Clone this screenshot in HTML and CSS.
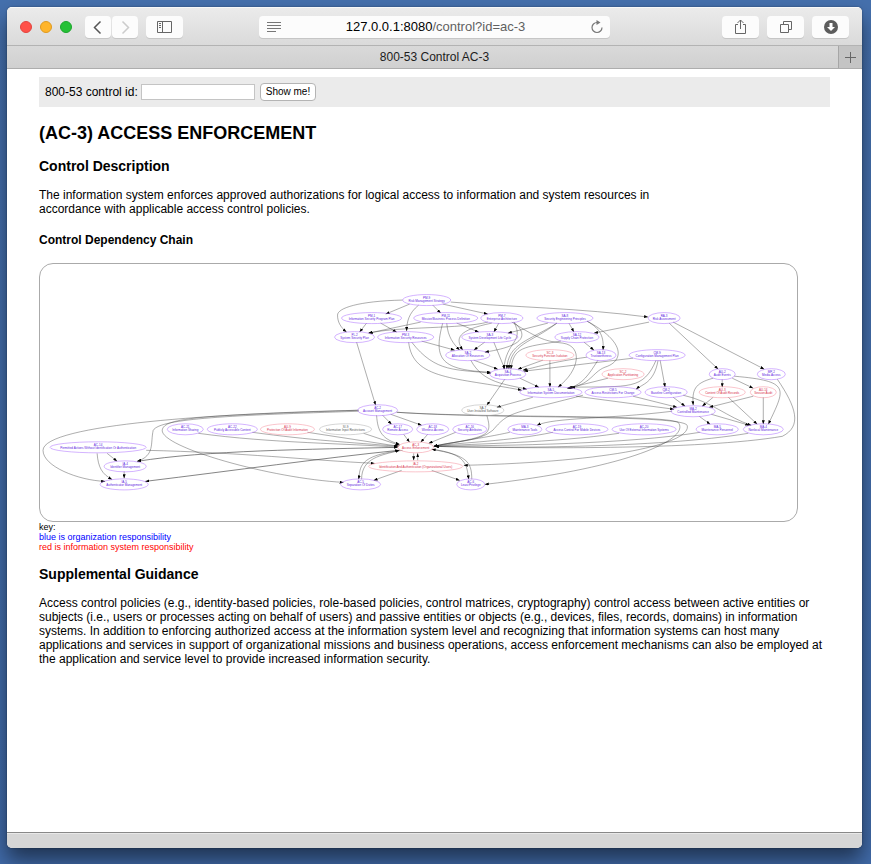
FILE: index.html
```html
<!DOCTYPE html>
<html lang="en">
<head>
<meta charset="utf-8">
<title>800-53 Control AC-3</title>
<link rel="stylesheet" href="styles.css">
</head>
<body>
<div class="window">
  <header class="toolbar">
    <div class="tools">
      <div class="lights"><span class="light close"></span><span class="light minimize"></span><span class="light expand"></span></div>
      <div class="history">
        <button class="tool narrow" type="button" aria-label="Back"><svg width="26" height="22" viewBox="0 0 26 22"><path d="M15.500 5.500 9.500 11.500l6 6" fill="none" stroke="#555" stroke-width="1.500"/></svg></button>
        <button class="tool narrow" type="button" aria-label="Forward"><svg width="26" height="22" viewBox="0 0 26 22"><path d="M10.500 5.500 16.500 11.500l-6 6" fill="none" stroke="#ccc" stroke-width="1.500"/></svg></button>
      </div>
      <button class="tool" type="button" aria-label="Sidebar"><svg width="37" height="22" viewBox="0 0 37 22" fill="none" stroke="#666"><path d="M11.500 5.500h14v11h-14zM16.500 5.500v11M13 7.500h2M13 9.500h2M13 11.500h2"/></svg></button>
    </div>
    <div class="address">
      <svg width="14" height="12" viewBox="0 0 14 12" stroke="#777"><path d="M0 1.500h14M0 4.500h14M0 7.500h14M0 10.500h9"/></svg>
      <span class="url">127.0.0.1:8080<span class="path">/control?id=ac-3</span></span>
      <svg width="14" height="14" viewBox="0 0 14 14"><path d="M7 2.500A5 5 0 1 0 12 7.500" fill="none" stroke="#777" stroke-width="1.200"/><path d="M6.500 0 10.500 2.500 6.500 5z" fill="#777"/></svg>
    </div>
    <div class="tools end">
      <button class="tool" type="button" aria-label="Share"><svg width="37" height="22" viewBox="0 0 37 22" fill="none" stroke="#666"><path d="M16 8.500h-2.500v9h10v-9h-2.500M18.500 13V4M15.500 7l3-3 3 3"/></svg></button>
      <button class="tool" type="button" aria-label="Show tabs"><svg width="37" height="22" viewBox="0 0 37 22" fill="none" stroke="#666"><path d="M13.500 8.500h8v8h-8zM16.500 8v-2.500h8v8h-2.500"/></svg></button>
      <button class="tool" type="button" aria-label="Downloads"><svg width="37" height="22" viewBox="0 0 37 22"><circle cx="19" cy="11" r="7" fill="#5c5c5c"/><path d="M17.500 7h3v4h2.500l-4 4-4-4h2.500z" fill="#fff"/></svg></button>
    </div>
  </header>
  <div class="tabs">
    <div class="tab">800-53 Control AC-3</div>
    <button class="new-tab" type="button" aria-label="New tab"><svg width="11" height="11" viewBox="0 0 11 11"><path d="M0 5.500h11M5.500 0v11" stroke="#666"/></svg></button>
  </div>
  <main>
    <form class="lookup">
      <label for="control-id">800-53 control id:</label>
      <input id="control-id" type="text">
      <button type="button">Show me!</button>
    </form>
    <h1>(AC-3) ACCESS ENFORCEMENT</h1>
    <h2>Control Description</h2>
    <p class="description">The information system enforces approved authorizations for logical access to information and system resources in accordance with applicable access control policies.</p>
    <h3>Control Dependency Chain</h3>
    <div class="chain">
      <svg viewBox="40 264 756 257">
        <defs><marker id="arrow" viewBox="0 0 4 3" refX="4" refY="1.500" markerWidth="4" markerHeight="3" markerUnits="userSpaceOnUse" orient="auto-start-reverse"><path d="M0 0 4 1.500 0 3z"/></marker></defs>
        <g class="edges">
          <path d="M402 300C358 301 337 308 337 315C337 322 340 327 346 332"/>
          <path d="M409 304 385 314"/>
          <path d="M418 305C408 313 406 322 406 331"/>
          <path d="M432 305 440 313"/>
          <path d="M442 304 487 314"/>
          <path d="M450 302C510 307 580 308 647 317"/>
          <path d="M366 323 359 332"/>
          <path d="M380 323 396 332"/>
          <path d="M420 322 368 333"/>
          <path d="M487 322C460 329 400 326 368 333"/>
          <path d="M442 323C432 360 441 370 490 372"/>
          <path d="M446 323C447 337 453 344 459 350"/>
          <path d="M456 323 478 332"/>
          <path d="M498 323 493 332"/>
          <path d="M491 323C457 330 454 338 462 350"/>
          <path d="M513 322C529 336 522 346 484 352"/>
          <path d="M513 322C524 342 505 341 503 369"/>
          <path d="M511 322C540 340 545 341 562 343C582 346 579 370 557 387"/>
          <path d="M547 323 507 333"/>
          <path d="M556 323C528 341 507 343 506 369"/>
          <path d="M556 323C530 343 510 343 508 369"/>
          <path d="M568 323 573 332"/>
          <path d="M586 321C600 329 603 337 602 350"/>
          <path d="M586 321C625 342 623 361 604 367C591 372 590 385 566 388"/>
          <path d="M648 322 593 333"/>
          <path d="M668 323 717 369"/>
          <path d="M672 322 763 369"/>
          <path d="M356 342 375 405"/>
          <path d="M408 342C412 380 455 377 521 390"/>
          <path d="M411 342C435 373 456 369 490 373"/>
          <path d="M421 341 454 350"/>
          <path d="M484 342 473 350"/>
          <path d="M493 342 504 369"/>
          <path d="M560 341C521 347 513 347 510 369"/>
          <path d="M583 342 593 350"/>
          <path d="M473 360 497 369"/>
          <path d="M470 360C482 383 505 384 526 389"/>
          <path d="M542 360 517 369"/><path d="M549 360V387"/>
          <path d="M586 357C550 362 540 366 522 370"/>
          <path d="M597 360C588 374 582 384 568 388"/>
          <path d="M632 358 523 371"/>
          <path d="M655 360C642 390 629 386 570 387"/>
          <path d="M657 360C653 383 641 384 635 389"/>
          <path d="M659 360 664 387"/>
          <path d="M607 378 567 388"/>
          <path d="M504 379 486 405"/><path d="M519 378 538 387"/>
          <path d="M712 378C693 383 691 390 692 405"/>
          <path d="M721 379V387"/><path d="M731 378 752 388"/>
          <path d="M733 376C790 381 784 388 767 424"/>
          <path d="M776 379C795 407 801 426 781 436C700 450 520 448 434 446"/>
          <path d="M532 397 496 407"/><path d="M575 396 673 409"/>
          <path d="M582 395C510 414 508 411 492 430C478 442 450 441 433 446"/>
          <path d="M632 396 676 407"/><path d="M672 397 684 406"/>
          <path d="M682 395C710 401 726 417 750 425"/>
          <path d="M712 397 701 406"/><path d="M727 397 756 424"/>
          <path d="M752 396 708 407"/><path d="M762 397V424"/>
          <path d="M671 411C605 419 554 417 536 425"/>
          <path d="M698 416 709 424"/><path d="M710 414 748 425"/>
          <path d="M486 415C492 436 488 436 433 446"/>
          <path d="M358 410C220 413 43 424 43 450C43 466 78 480 105 481"/>
          <path d="M358 411C232 415 160 418 153 430C150 443 155 455 137 461"/>
          <path d="M358 410C205 415 163 417 162 430C161 447 270 478 343 482"/>
          <path d="M396 412C490 418 660 414 677 422C690 438 632 467 484 484"/>
          <path d="M396 412C495 419 680 414 686 425C691 442 619 461 463 465"/>
          <path d="M376 415C377 432 382 439 399 444"/>
          <path d="M382 415 391 424"/><path d="M390 414 421 425"/>
          <path d="M198 433C270 443 350 443 397 447"/>
          <path d="M252 432C310 440 350 442 397 446"/>
          <path d="M307 432 398 446"/><path d="M363 433 399 445"/>
          <path d="M403 434 409 442"/><path d="M427 434 420 442"/><path d="M455 432 428 443"/>
          <path d="M509 432C482 438 450 442 433 446"/>
          <path d="M552 432C509 441 460 442 433 446"/>
          <path d="M618 433C550 443 475 443 434 446"/>
          <path d="M699 432C625 444 510 445 434 446"/>
          <path d="M747 433C658 448 490 448 434 446"/>
          <path d="M107 453 117 461"/><path d="M97 453C98 467 102 474 112 479"/>
          <path d="M146 450C240 452 310 460 374 463"/>
          <path class="both" d="M137 461C205 450 310 449 397 447"/>
          <path class="both" d="M145 481C235 470 320 458 398 450"/>
          <path d="M124 471V478"/><path d="M413 453V460"/><path d="M417 460V453"/>
          <path d="M401 470 373 480"/><path d="M431 470 459 480"/>
          <path d="M402 450C357 455 360 467 358 479"/>
          <path d="M361 479C361 457 381 455 399 450"/>
          <path d="M431 449C466 453 466 465 468 479"/>
          <path d="M471 479C471 461 466 455 431 449"/>
        </g>
        <g class="nodes">
          <g transform="translate(426 300)"><ellipse rx="24" ry="5.500"/><text y="-1">PM-9</text><text y="2">Risk Management Strategy</text></g>
          <g transform="translate(371 318)"><ellipse rx="30" ry="5.500"/><text y="-1">PM-1</text><text y="2">Information Security Program Plan</text></g>
          <g transform="translate(445 318)"><ellipse rx="32" ry="5.500"/><text y="-1">PM-11</text><text y="2">Mission/Business Process Definition</text></g>
          <g transform="translate(501 318)"><ellipse rx="21" ry="5.500"/><text y="-1">PM-7</text><text y="2">Enterprise Architecture</text></g>
          <g transform="translate(564 318)"><ellipse rx="28" ry="5.500"/><text y="-1">SA-8</text><text y="2">Security Engineering Principles</text></g>
          <g transform="translate(663 318)"><ellipse rx="16" ry="5.500"/><text y="-1">RA-3</text><text y="2">Risk Assessment</text></g>
          <g transform="translate(354 337)"><ellipse rx="20" ry="5.500"/><text y="-1">PL-2</text><text y="2">System Security Plan</text></g>
          <g transform="translate(405 337)"><ellipse rx="28" ry="5.500"/><text y="-1">PM-3</text><text y="2">Information Security Resources</text></g>
          <g transform="translate(489 337)"><ellipse rx="28" ry="5.500"/><text y="-1">SA-3</text><text y="2">System Development Life Cycle</text></g>
          <g transform="translate(576 337)"><ellipse rx="22" ry="5.500"/><text y="-1">SA-12</text><text y="2">Supply Chain Protection</text></g>
          <g transform="translate(467 355)"><ellipse rx="22" ry="5.500"/><text y="-1">SA-2</text><text y="2">Allocation Of Resources</text></g>
          <g class="system" transform="translate(549 355)"><ellipse rx="24" ry="5.500"/><text y="-1">SC-3</text><text y="2">Security Function Isolation</text></g>
          <g transform="translate(600 355)"><ellipse rx="15" ry="5.500"/><text y="-1">SA-13</text><text y="2">Trustworthiness</text></g>
          <g transform="translate(656 355)"><ellipse rx="28" ry="5.500"/><text y="-1">CM-9</text><text y="2">Configuration Management Plan</text></g>
          <g transform="translate(507 374)"><ellipse rx="18" ry="5.500"/><text y="-1">SA-4</text><text y="2">Acquisition Process</text></g>
          <g class="system" transform="translate(622 374)"><ellipse rx="21" ry="5.500"/><text y="-1">SC-2</text><text y="2">Application Partitioning</text></g>
          <g transform="translate(721 374)"><ellipse rx="13" ry="5.500"/><text y="-1">AU-2</text><text y="2">Audit Events</text></g>
          <g transform="translate(770 374)"><ellipse rx="14" ry="5.500"/><text y="-1">MP-2</text><text y="2">Media Access</text></g>
          <g transform="translate(550 392)"><ellipse rx="31" ry="5.500"/><text y="-1">SA-5</text><text y="2">Information System Documentation</text></g>
          <g transform="translate(612 392)"><ellipse rx="28" ry="5.500"/><text y="-1">CM-5</text><text y="2">Access Restrictions For Change</text></g>
          <g transform="translate(665 392)"><ellipse rx="21" ry="5.500"/><text y="-1">CM-2</text><text y="2">Baseline Configuration</text></g>
          <g class="system" transform="translate(721 392)"><ellipse rx="23" ry="5.500"/><text y="-1">AU-3</text><text y="2">Content Of Audit Records</text></g>
          <g class="system" transform="translate(762 392)"><ellipse rx="13" ry="5.500"/><text y="-1">AU-14</text><text y="2">Session Audit</text></g>
          <g transform="translate(692 411)"><ellipse rx="22" ry="5.500"/><text y="-1">MA-2</text><text y="2">Controlled Maintenance</text></g>
          <g transform="translate(377 410)"><ellipse rx="20" ry="5.500"/><text y="-1">AC-2</text><text y="2">Account Management</text></g>
          <g class="neutral" transform="translate(482 410)"><ellipse rx="21" ry="5.500"/><text y="-1">SA-7</text><text y="2">User-Installed Software</text></g>
          <g transform="translate(185 429)"><ellipse rx="18" ry="5.500"/><text y="-1">AC-21</text><text y="2">Information Sharing</text></g>
          <g transform="translate(232 429)"><ellipse rx="25" ry="5.500"/><text y="-1">AC-22</text><text y="2">Publicly Accessible Content</text></g>
          <g class="system" transform="translate(287 429)"><ellipse rx="27" ry="5.500"/><text y="-1">AU-9</text><text y="2">Protection Of Audit Information</text></g>
          <g class="neutral" transform="translate(345 429)"><ellipse rx="26" ry="5.500"/><text y="-1">SI-9</text><text y="2">Information Input Restrictions</text></g>
          <g transform="translate(397 429)"><ellipse rx="15" ry="5.500"/><text y="-1">AC-17</text><text y="2">Remote Access</text></g>
          <g transform="translate(432 429)"><ellipse rx="16" ry="5.500"/><text y="-1">AC-18</text><text y="2">Wireless Access</text></g>
          <g transform="translate(469 429)"><ellipse rx="17" ry="5.500"/><text y="-1">AC-16</text><text y="2">Security Attributes</text></g>
          <g transform="translate(524 429)"><ellipse rx="17" ry="5.500"/><text y="-1">MA-3</text><text y="2">Maintenance Tools</text></g>
          <g transform="translate(576 429)"><ellipse rx="31" ry="5.500"/><text y="-1">AC-19</text><text y="2">Access Control For Mobile Devices</text></g>
          <g transform="translate(643 429)"><ellipse rx="32" ry="5.500"/><text y="-1">AC-20</text><text y="2">Use Of External Information Systems</text></g>
          <g transform="translate(716 429)"><ellipse rx="21" ry="5.500"/><text y="-1">MA-5</text><text y="2">Maintenance Personnel</text></g>
          <g transform="translate(762 429)"><ellipse rx="20" ry="5.500"/><text y="-1">MA-4</text><text y="2">Nonlocal Maintenance</text></g>
          <g transform="translate(98 447)"><ellipse rx="48" ry="5.500"/><text y="-1">AC-14</text><text y="2">Permitted Actions Without Identification Or Authentication</text></g>
          <g class="system" transform="translate(415 447)"><ellipse rx="18" ry="5.500"/><text y="-1">AC-3</text><text y="2">Access Enforcement</text></g>
          <g transform="translate(125 466)"><ellipse rx="21" ry="5.500"/><text y="-1">IA-4</text><text y="2">Identifier Management</text></g>
          <g class="system" transform="translate(415 466)"><ellipse rx="47" ry="5.500"/><text y="-1">IA-2</text><text y="2">Identification And Authentication (Organizational Users)</text></g>
          <g transform="translate(124 484)"><ellipse rx="24" ry="5.500"/><text y="-1">IA-5</text><text y="2">Authenticator Management</text></g>
          <g transform="translate(360 484)"><ellipse rx="20" ry="5.500"/><text y="-1">AC-5</text><text y="2">Separation Of Duties</text></g>
          <g transform="translate(470 484)"><ellipse rx="14" ry="5.500"/><text y="-1">AC-6</text><text y="2">Least Privilege</text></g>
        </g>
      </svg>
    </div>
    <div class="key">
      <div>key:</div>
      <div class="organization">blue is organization responsibility</div>
      <div class="information">red is information system responsibility</div>
    </div>
    <h2>Supplemental Guidance</h2>
    <p>Access control policies (e.g., identity-based policies, role-based policies, control matrices, cryptography) control access between active entities or subjects (i.e., users or processes acting on behalf of users) and passive entities or objects (e.g., devices, files, records, domains) in information systems. In addition to enforcing authorized access at the information system level and recognizing that information systems can host many applications and services in support of organizational missions and business operations, access enforcement mechanisms can also be employed at the application and service level to provide increased information security.</p>
  </main>
  <footer class="status"></footer>
</div>
</body>
</html>
```
FILE: styles.css
```css
* { box-sizing: border-box; }
html { background: linear-gradient(#4570ad, #406aa8); }
body {
  margin: 0;
  padding: 7px 9px 16px 7px;
  min-height: 100vh;
  display: flex;
  overflow-x: hidden;
  font: 12px/14px "Liberation Sans", Arial, sans-serif;
  color: #000;
}
button, input { font-family: inherit; margin: 0; }
svg { display: block; }

.window {
  flex: 1;
  min-width: 0;
  display: flex;
  flex-direction: column;
  border-radius: 5px;
  overflow: hidden;
  background: #fff;
  box-shadow: 0 0 2px rgba(0, 0, 0, .4), 0 12px 20px rgba(0, 0, 0, .5);
}
.toolbar {
  height: 39px;
  padding: 0 13px;
  display: flex;
  align-items: center;
  background: linear-gradient(#ebebeb, #dadada);
  border-top: 1px solid #f8f8f8;
  border-bottom: 1px solid #b3b3b3;
}
.tools { flex: 1; display: flex; align-items: center; gap: 8px; }
.tools.end { justify-content: flex-end; }
.lights { display: flex; gap: 8px; margin-right: 5px; }
.light { width: 12px; height: 12px; border-radius: 50%; border: 1px solid; }
.close { background: #ff5149; border-color: #e2443e; }
.minimize { background: #ffb52b; border-color: #df9a20; }
.expand { background: #25c136; border-color: #1ba52c; }
.history { display: flex; gap: 1px; }
.tool {
  width: 37px;
  height: 22px;
  padding: 0;
  border: 0;
  border-radius: 4px;
  background: #fcfcfc;
  box-shadow: 0 1px 0 #c6c6c6;
}
.tool.narrow { width: 26px; }
.address {
  width: 42.4%;
  height: 22px;
  padding: 0 6px 0 8px;
  display: flex;
  align-items: center;
  border-radius: 4px;
  background: #fcfcfc;
  box-shadow: 0 1px 0 #c6c6c6;
}
.url { flex: 1; text-align: center; font-size: 13px; line-height: 16px; }
.path { color: #606060; }

.tabs {
  height: 23px;
  display: flex;
  background: linear-gradient(#d9d9d9, #d0d0d0);
  border-bottom: 1px solid #adadad;
}
.tab { flex: 1; padding-left: 24px; text-align: center; font-size: 12px; line-height: 22px; color: #1c1c1c; }
.new-tab {
  width: 24px;
  padding: 0;
  display: grid;
  place-items: center;
  border: 0;
  border-left: 1px solid #a6a6a6;
  background: #c4c4c4;
}

main { flex: 1; padding: 8px 32px; }
.lookup {
  height: 30px;
  padding: 0 6px;
  display: flex;
  align-items: center;
  background: #ebebeb;
}
.lookup label { margin-right: 3px; }
.lookup input { width: 114px; height: 16px; padding: 0 2px; border: 1px solid #c4c4c4; background: #fff; font-size: 11px; }
.lookup button {
  height: 18px;
  margin-left: 5px;
  padding: 0 5px;
  border: 1px solid #b4b4b4;
  border-radius: 4px;
  background: #fff;
  font-size: 10px;
  line-height: 16px;
  color: #000;
}
h1 { margin: 16px 0 14px; font-size: 18px; line-height: 21px; }
h2 { margin: 14px 0; font-size: 14px; line-height: 16px; }
h3 { margin: 17px 0 16px; font-size: 12px; line-height: 14px; }
p { margin: 14px 0; }
.description { max-width: 640px; }
.chain { width: 96%; border: 1px solid #aaa; border-radius: 14px; }
.chain svg { width: 100%; height: auto; }
.edges path { fill: none; stroke: #333; stroke-width: .4px; marker-end: url(#arrow); }
.edges .both { stroke-width: .6px; marker-start: url(#arrow); }
#arrow path { fill: #000; stroke: none; marker-end: none; }
.nodes ellipse { fill: none; stroke: #a968ff; stroke-width: .5px; }
.nodes text { font-size: 3px; text-anchor: middle; fill: #5c1be0; }
.nodes .system ellipse { stroke: #f58a98; }
.nodes .system text { fill: #d8304c; }
.nodes .neutral ellipse { stroke: #aaa; }
.nodes .neutral text { fill: #555; }
.key { font-size: 9px; line-height: 10px; }
.organization { color: #00f; }
.information { color: #f00; }
.status { height: 16px; border-top: 1px solid #888; background: #d6d6d6; box-shadow: inset 0 1px 0 #e8e8e8; }
```
